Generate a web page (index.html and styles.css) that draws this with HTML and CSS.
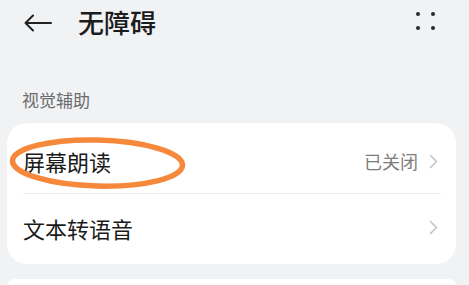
FILE: index.html
```html
<!DOCTYPE html>
<html lang="zh-CN">
<head>
    <meta charset="UTF-8">
    <meta name="viewport" content="width=device-width, initial-scale=1.0">
    <title>无障碍</title>
    <link rel="stylesheet" href="styles.css">
</head>
<body>
    <div class="header">
        <svg class="back" width="30" height="18" viewBox="0 0 30 18">
            <path d="M28 9H3M10 1.5L2.5 9L10 16.5" fill="none" stroke="#222" stroke-width="2" stroke-linecap="round" stroke-linejoin="round"/>
        </svg>
        <h1 class="title">无障碍</h1>
        <div class="more">
            <span></span><span></span><span></span><span></span>
        </div>
    </div>

    <div class="section-label">视觉辅助</div>

    <div class="card">
        <div class="row row-first">
            <span class="row-title">屏幕朗读</span>
            <span class="row-value">已关闭</span>
            <svg class="chevron" width="9" height="15" viewBox="0 0 9 15">
                <path d="M1.5 1.5L7.5 7.5L1.5 13.5" fill="none" stroke="#c4c4c4" stroke-width="1.6" stroke-linecap="round" stroke-linejoin="round"/>
            </svg>
        </div>
        <div class="divider"></div>
        <div class="row row-last">
            <span class="row-title">文本转语音</span>
            <svg class="chevron" width="9" height="15" viewBox="0 0 9 15">
                <path d="M1.5 1.5L7.5 7.5L1.5 13.5" fill="none" stroke="#c4c4c4" stroke-width="1.6" stroke-linecap="round" stroke-linejoin="round"/>
            </svg>
        </div>

        <!-- hand-drawn highlight around 屏幕朗读 -->
        <svg class="circle" width="180" height="56" viewBox="0 0 180 56">
            <ellipse cx="90.5" cy="28" rx="85" ry="23" fill="none" stroke="#f5883a" stroke-width="5.5" transform="rotate(1.5 90 28)"/>
        </svg>
    </div>

    <div class="card card-next"></div>
</body>
</html>
```

FILE: styles.css
```css
* {
    margin: 0;
    padding: 0;
    box-sizing: border-box;
}

body {
    font-family: "Noto Sans CJK SC", "Noto Sans", sans-serif;
    background: #f1f2f4;
    color: #1f1f1f;
    width: 469px;
    height: 285px;
    overflow: hidden;
}

.header {
    height: 44px;
    display: flex;
    align-items: center;
    padding-left: 23px;
}

.back {
    display: block;
    margin-top: 1px;
}

.title {
    font-size: 26px;
    font-weight: 500;
    margin-left: 25px;
    line-height: 1;
    color: #1c1c1c;
}

.more {
    margin-left: auto;
    margin-right: 34px;
    display: grid;
    grid-template-columns: 4px 4px;
    grid-template-rows: 4px 4px;
    column-gap: 11px;
    row-gap: 10px;
    margin-top: -2px;
}

.more span {
    width: 4px;
    height: 4px;
    border-radius: 50%;
    background: #2a2a2a;
}

.section-label {
    font-size: 17px;
    color: #6b6b6b;
    padding-left: 22px;
    margin-top: 45px;
    line-height: 22px;
}

.card {
    position: relative;
    background: #ffffff;
    margin: 12px 13px 0 7px;
    border-radius: 20px;
}

.row {
    height: 70px;
    display: flex;
    align-items: center;
    padding: 0 18px 0 16px;
}

.row-first {
    padding-top: 6px;
}

.row-last {
    padding-bottom: 3px;
}

.row-title {
    font-size: 22px;
    line-height: 1;
    color: #1a1a1a;
}

.row-value {
    margin-left: auto;
    font-size: 18px;
    color: #7d7d7d;
    margin-right: 11px;
}

.row .chevron {
    margin-left: auto;
}

.row-value + .chevron {
    margin-left: 0;
}

.divider {
    height: 1px;
    background: #ebebeb;
    margin: 0 15px 0 16px;
}

.circle {
    position: absolute;
    left: 0;
    top: 12px;
}

.card-next {
    margin-top: 15px;
    height: 7px;
    border-radius: 20px 20px 0 0;
}
```
